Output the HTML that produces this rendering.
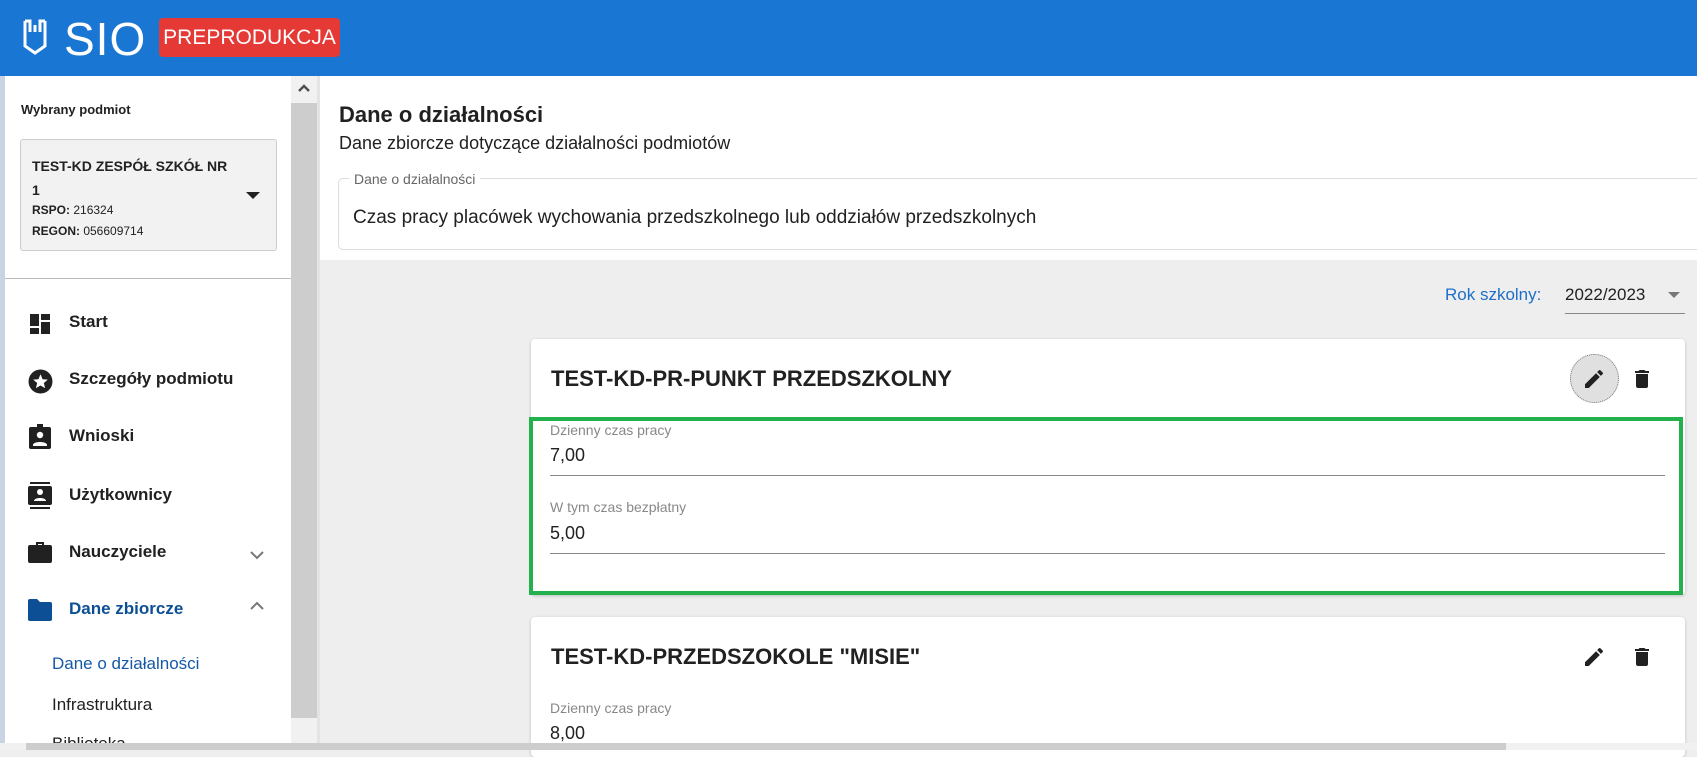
<!DOCTYPE html>
<html><head><meta charset="utf-8"><style>
*{box-sizing:border-box;margin:0;padding:0}
body{width:1697px;height:750px;overflow:hidden;position:relative;font-family:"Liberation Sans",Roboto,sans-serif;color:#212121;background:#eee}
.abs{position:absolute}
.hdr{left:0;top:0;width:1697px;height:76px;background:#1976d2}
.side{left:5px;top:76px;width:286px;height:674px;background:#fff}
.strip{left:0;top:76px;width:5px;height:674px;background:#c8d3e3}
.sb{left:291px;top:76px;width:26px;height:667px;background:#cdcdcd}
.nav{position:absolute;left:69px;font-size:17px;font-weight:bold;color:#212121}
.ico{position:absolute;left:28px}
.lbl{font-size:14px;color:#888}
.val{font-size:18px;color:#212121}
.line{position:absolute;height:1px;background:#8a8a8a}
</style></head><body>
<div class="abs hdr"></div>
<svg class="abs" style="left:22px;top:18px" width="26" height="38" viewBox="0 0 26 38"><path d="M3 3 V28 L13 35 L23 28 V3 M3 3 H8 V14 M23 3 H18 V14 M13 7 V14" fill="none" stroke="#fff" stroke-width="3"/></svg>
<div class="abs" style="left:64px;top:12px;font-size:46px;color:#fff;letter-spacing:1px">SIO</div>
<div class="abs" style="left:159px;top:18px;width:181px;height:39px;background:#e53935;border-radius:4px;color:#fff;font-size:21px;line-height:39px;text-align:center">PREPRODUKCJA</div>
<div class="abs strip"></div>
<div class="abs side"></div>
<div class="abs sb"></div>
<div class="abs" style="left:291px;top:76px;width:26px;height:27px;background:#f1f1f1"></div>
<svg class="abs" style="left:297px;top:82px" width="14" height="12"><path d="M2 9 L7 4 L12 9" fill="none" stroke="#505050" stroke-width="2.5"/></svg>
<div class="abs" style="left:291px;top:718px;width:26px;height:25px;background:#f1f1f1"></div>
<div class="abs" style="left:317px;top:76px;width:3px;height:674px;background:#e4e4e4"></div>
<div class="abs" style="left:21px;top:102px;font-size:13px;font-weight:bold">Wybrany podmiot</div>
<div class="abs" style="left:20px;top:139px;width:257px;height:112px;background:#f2f2f2;border:1px solid #ccc;border-radius:3px">
<div class="abs" style="left:11px;top:14px;font-size:14px;font-weight:bold;line-height:24px">TEST-KD ZESPÓŁ SZKÓŁ NR<br>1</div>
<div class="abs" style="left:11px;top:63px;font-size:12px"><b>RSPO:</b> 216324</div>
<div class="abs" style="left:11px;top:84px;font-size:12px"><b>REGON:</b> 056609714</div>
<svg class="abs" style="left:225px;top:52px" width="14" height="8"><path d="M0 0 H14 L7 7Z" fill="#212121"/></svg>
</div>
<div class="abs" style="left:5px;top:278px;width:286px;height:1px;background:#bbb"></div>
<svg class="ico" style="top:312px" width="24" height="24" viewBox="0 0 24 24"><path d="M2 2h9v12H2zM13 2h9v6h-9zM13 10h9v12h-9zM2 16h9v6H2z" fill="#212121"/></svg>
<div class="nav" style="top:312px">Start</div>
<svg class="ico" style="top:369px" width="25" height="25" viewBox="0 0 24 24"><circle cx="12" cy="12" r="11.5" fill="#212121"/><path d="M12 5l2 4.8 5 .4-3.8 3.3 1.2 4.9L12 15.8 7.6 18.4l1.2-4.9L5 10.2l5-.4z" fill="#fff"/></svg>
<div class="nav" style="top:369px">Szczegóły podmiotu</div>
<svg class="ico" style="top:424px" width="24" height="26" viewBox="0 0 24 26"><rect x="1" y="3" width="22" height="22" rx="2" fill="#212121"/><rect x="9" y="0" width="6" height="5" fill="#212121"/><circle cx="12" cy="11" r="3.2" fill="#fff"/><path d="M5 21c0-4 14-4 14 0v1H5z" fill="#fff"/></svg>
<div class="nav" style="top:426px">Wnioski</div>
<svg class="ico" style="top:482px" width="24" height="28" viewBox="0 0 24 28"><rect x="2" y="0" width="20" height="2" fill="#212121"/><rect x="0" y="4" width="24" height="19" rx="2" fill="#212121"/><rect x="2" y="25" width="20" height="2" fill="#212121"/><circle cx="12" cy="10" r="3" fill="#fff"/><path d="M6 19c0-4 12-4 12 0z" fill="#fff"/></svg>
<div class="nav" style="top:485px">Użytkownicy</div>
<svg class="ico" style="top:540px" width="24" height="24" viewBox="0 0 24 24"><path d="M8 5V2h8v3h6a2 2 0 0 1 2 2v14a2 2 0 0 1-2 2H2a2 2 0 0 1-2-2V7a2 2 0 0 1 2-2zM10 4v1h4V4z" fill="#212121"/></svg>
<div class="nav" style="top:542px">Nauczyciele</div>
<svg class="abs" style="left:250px;top:550px" width="14" height="10"><path d="M1 2l6 6 6-6" fill="none" stroke="#777" stroke-width="2"/></svg>
<svg class="ico" style="top:599px" width="24" height="22" viewBox="0 0 24 22"><path d="M0 2a2 2 0 0 1 2-2h7l3 3h10a2 2 0 0 1 2 2v15a2 2 0 0 1-2 2H2a2 2 0 0 1-2-2z" fill="#0d4f94"/></svg>
<div class="nav" style="top:599px;color:#0d4f94">Dane zbiorcze</div>
<svg class="abs" style="left:250px;top:601px" width="14" height="10"><path d="M1 8l6-6 6 6" fill="none" stroke="#777" stroke-width="2"/></svg>
<div class="abs" style="left:52px;top:654px;font-size:17px;color:#1559a6">Dane o działalności</div>
<div class="abs" style="left:52px;top:695px;font-size:17px;color:#212121">Infrastruktura</div>
<div class="abs" style="left:52px;top:734px;font-size:17px;color:#212121">Biblioteka</div>

<div class="abs" style="left:320px;top:76px;width:1377px;height:184px;background:#fff"></div>
<div class="abs" style="left:339px;top:102px;font-size:22px;font-weight:bold">Dane o działalności</div>
<div class="abs" style="left:339px;top:133px;font-size:18px">Dane zbiorcze dotyczące działalności podmiotów</div>
<div class="abs" style="left:338px;top:178px;width:1365px;height:72px;border:1px solid #ddd;border-radius:5px"></div>
<div class="abs" style="left:349px;top:171px;padding:0 5px;background:#fff;font-size:14px;color:#666">Dane o działalności</div>
<div class="abs" style="left:353px;top:207px;font-size:19px">Czas pracy placówek wychowania przedszkolnego lub oddziałów przedszkolnych</div>

<div class="abs" style="left:1445px;top:285px;font-size:17px;color:#1e6fc7">Rok szkolny:</div>
<div class="abs" style="left:1565px;top:285px;font-size:17px">2022/2023</div>
<svg class="abs" style="left:1668px;top:292px" width="12" height="7"><path d="M0 0H12L6 6z" fill="#777"/></svg>
<div class="abs" style="left:1565px;top:313px;width:120px;height:1px;background:#888"></div>

<div class="abs" style="left:531px;top:339px;width:1154px;height:256px;background:#fff;border-radius:4px;box-shadow:0 1px 3px rgba(0,0,0,.2)"></div>
<div class="abs" style="left:551px;top:366px;font-size:22px;font-weight:bold">TEST-KD-PR-PUNKT PRZEDSZKOLNY</div>
<div class="abs" style="left:1570px;top:354px;width:49px;height:49px;border-radius:50%;background:#e0e0e0;border:1px dotted #777"></div>
<svg class="abs" style="left:1582px;top:367px" width="24" height="24" viewBox="0 0 24 24"><path d="M3 17.25V21h3.75L17.81 9.94l-3.75-3.750L3 17.25zM20.71 7.04a1 1 0 0 0 0-1.41l-2.34-2.34a1 1 0 0 0-1.41 0l-1.83 1.83 3.75 3.75z" fill="#212121"/></svg>
<svg class="abs" style="left:1630px;top:367px" width="24" height="24" viewBox="0 0 24 24"><path d="M6 19c0 1.1.9 2 2 2h8a2 2 0 0 0 2-2V7H6zM19 4h-3.5l-1-1h-5l-1 1H5v2h14z" fill="#212121"/></svg>
<div class="abs" style="left:529px;top:417px;width:1154px;height:178px;border:4px solid #22b14c"></div>
<div class="abs lbl" style="left:550px;top:422px">Dzienny czas pracy</div>
<div class="abs val" style="left:550px;top:445px">7,00</div>
<div class="line" style="left:550px;top:475px;width:1115px"></div>
<div class="abs lbl" style="left:550px;top:499px">W tym czas bezpłatny</div>
<div class="abs val" style="left:550px;top:523px">5,00</div>
<div class="line" style="left:550px;top:553px;width:1115px"></div>

<div class="abs" style="left:531px;top:617px;width:1154px;height:140px;background:#fff;border-radius:4px;box-shadow:0 1px 3px rgba(0,0,0,.2)"></div>
<div class="abs" style="left:551px;top:644px;font-size:22px;font-weight:bold">TEST-KD-PRZEDSZOKOLE "MISIE"</div>
<svg class="abs" style="left:1582px;top:645px" width="24" height="24" viewBox="0 0 24 24"><path d="M3 17.25V21h3.75L17.81 9.94l-3.75-3.75L3 17.25zM20.71 7.04a1 1 0 0 0 0-1.41l-2.34-2.34a1 1 0 0 0-1.41 0l-1.83 1.83 3.75 3.75z" fill="#212121"/></svg>
<svg class="abs" style="left:1630px;top:645px" width="24" height="24" viewBox="0 0 24 24"><path d="M6 19c0 1.1.9 2 2 2h8a2 2 0 0 0 2-2V7H6zM19 4h-3.5l-1-1h-5l-1 1H5v2h14z" fill="#212121"/></svg>
<div class="abs lbl" style="left:550px;top:700px">Dzienny czas pracy</div>
<div class="abs val" style="left:550px;top:723px">8,00</div>

<div class="abs" style="left:0;top:743px;width:1697px;height:7px;background:#f1f1f1"></div>
<div class="abs" style="left:26px;top:743px;width:1480px;height:7px;background:#cdcdcd"></div>
</body></html>
